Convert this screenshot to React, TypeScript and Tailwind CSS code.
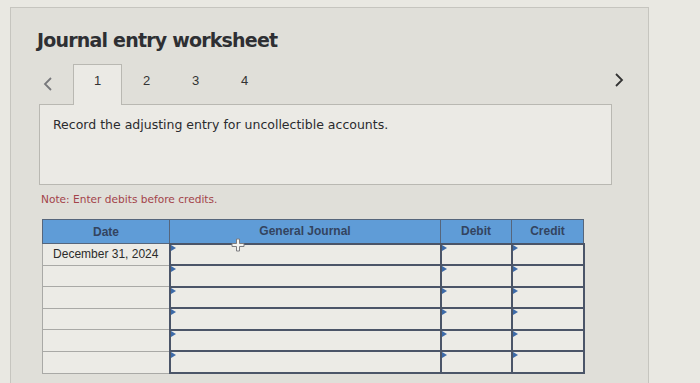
import React from 'react';

const rows = ['December 31, 2024', '', '', '', '', ''];

function Marker() {
  return (
    <span className="absolute left-0 top-0 w-0 h-0 border-l-[5px] border-l-[#3d6aa8] border-y-[3px] border-y-transparent" />
  );
}

function App() {
  return (
    <div className="w-[700px] h-[383px] overflow-hidden bg-[#e9e8e2] pt-[7px] pl-[10px]">
      <div className="relative w-[639px] h-[400px] bg-[#e0dfd9] border border-[#c6c5bf] font-['DejaVu_Sans',sans-serif]">
        <h1 className="ml-[26px] mt-[20px] text-[19px] leading-[24px] font-bold text-[#2e2f33] tracking-[-0.8px]">
          Journal entry worksheet
        </h1>

        <div className="relative ml-[28px] mt-[12px] w-[573px] h-[40px] flex items-end">
          <div className="w-[34px] h-[40px] flex items-center pl-[4px] text-[#77787b]">
            <svg width="10" height="16" viewBox="0 0 10 16" fill="none">
              <path d="M8 2 L2 8 L8 14" stroke="currentColor" strokeWidth="1.8" />
            </svg>
          </div>
          <div className="w-[49px] h-[41px] -mb-[1px] z-10 bg-[#ebeae5] border border-b-0 border-[#b9b8b2] flex items-start justify-center pt-[6px] font-['Liberation_Sans',sans-serif] text-[13px] text-[#333]">
            1
          </div>
          {['2', '3', '4'].map((n) => (
            <div key={n} className="w-[49px] h-[40px] flex items-start justify-center pt-[7px] font-['Liberation_Sans',sans-serif] text-[13px] text-[#333]">
              {n}
            </div>
          ))}
          <div className="absolute right-[-12px] top-[8px] text-[#333]">
            <svg width="10" height="16" viewBox="0 0 10 16" fill="none">
              <path d="M2 2 L8 8 L2 14" stroke="currentColor" strokeWidth="1.8" />
            </svg>
          </div>
        </div>

        <div className="ml-[28px] w-[573px] h-[81px] bg-[#ebeae5] border border-[#b9b8b2] pl-[13px] pt-[12px]">
          <p className="text-[12.5px] leading-[16px] text-[#2a2b2e]">
            Record the adjusting entry for uncollectible accounts.
          </p>
        </div>

        <p className="ml-[30px] mt-[7px] text-[10.6px] leading-[14px] text-[#a3434a]">
          Note: Enter debits before credits.
        </p>

        <div className="relative ml-[31px] mt-[13px] w-[541px]">
          <table className="w-[541px] border-collapse table-fixed font-['Liberation_Sans',sans-serif]">
            <colgroup>
              <col className="w-[127px]" />
              <col className="w-[271px]" />
              <col className="w-[71px]" />
              <col className="w-[72px]" />
            </colgroup>
            <thead>
              <tr className="h-[24px] bg-[#5f9cd7] text-[#33445f] text-[12px] font-bold">
                <th className="border border-[#56667c]">Date</th>
                <th className="border border-[#56667c]">General Journal</th>
                <th className="border border-[#56667c]">Debit</th>
                <th className="border border-[#56667c]">Credit</th>
              </tr>
            </thead>
            <tbody>
              {rows.map((d, i) => (
                <tr key={i} className="h-[21.6px] bg-[#ecebe6]">
                  <td className="border border-[#a9a9a6] text-[12px] text-[#2b2b2b] text-center px-1">
                    {d}
                  </td>
                  <td className="relative border-2 border-[#4b5568]">
                    <Marker />
                  </td>
                  <td className="relative border-2 border-[#4b5568]">
                    <Marker />
                  </td>
                  <td className="relative border-2 border-[#4b5568]">
                    <Marker />
                  </td>
                </tr>
              ))}
            </tbody>
          </table>
          <svg className="absolute left-[189px] top-[19px]" width="14" height="14" viewBox="0 0 14 14">
            <path
              d="M5.5 1 H8.5 V5.5 H13 V8.5 H8.5 V13 H5.5 V8.5 H1 V5.5 H5.5 Z"
              fill="#f4f4f2"
              stroke="#7c7c80"
              strokeWidth="1"
            />
          </svg>
        </div>
      </div>
    </div>
  );
}

export default App;
